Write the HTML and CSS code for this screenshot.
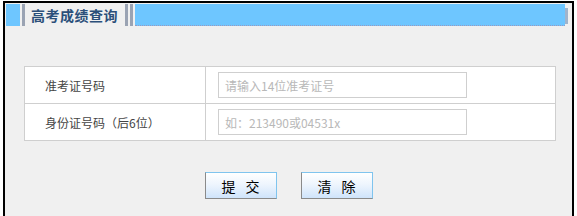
FILE: index.html
```html
<!DOCTYPE html>
<html>
<head>
    <meta charset="utf-8">
    <title>高考成绩查询</title>
    <link rel="stylesheet" href="styles.css">
</head>
<body>
    <div class="caja">
        <!-- Encabezado -->
        <div class="cabecera">
            <span class="bloque"></span>
            <span class="barra barra-1"></span>
            <span class="titulo">高考成绩查询</span>
            <span class="barra"></span>
            <span class="barra barra-2"></span>
            <span class="relleno"></span>
            <span class="marca"></span>
        </div>

        <div class="cuerpo">
            <table class="tabla">
                <tr>
                    <td class="etiqueta">准考证号码</td>
                    <td class="campo"><input type="text" placeholder="请输入14位准考证号"></td>
                </tr>
                <tr>
                    <td class="etiqueta">身份证号码（后6位）</td>
                    <td class="campo"><input type="text" placeholder="如：213490或04531x"></td>
                </tr>
            </table>

            <div class="botones">
                <button class="boton">提交</button>
                <button class="boton">清除</button>
            </div>
        </div>
    </div>
</body>
</html>
```

FILE: styles.css
```css
html, body {
    overflow: hidden;
}

body {
    margin: 1px 0 0 3px;
    background-color: #fff;
    font-family: "Noto Sans CJK SC", "DejaVu Sans", sans-serif;
    font-size: 12px;
    color: #444;
}

.caja {
    width: 567px;
    height: 213px;
    border: 2px solid #000;
    border-bottom: none;
    background-color: #f0f0f0;
}

.cabecera {
    display: flex;
    align-items: stretch;
    height: 22px;
    margin: 1px 4px 0 1px;
}

.bloque {
    width: 14px;
    background-color: #6ec6ff;
}

.barra {
    width: 3px;
    margin-left: 2px;
    background-color: #9aa3b3;
}

.barra-1 {
    margin-left: 2px;
}

.titulo {
    display: flex;
    align-items: center;
    padding: 0 5px 0 6px;
    font-size: 14px;
    font-weight: bold;
    color: #2b4f7a;
    letter-spacing: 0.5px;
}

.barra-2 {
    margin-right: 2px;
}

.relleno {
    flex: 1;
    background-color: #6ec6ff;
    border-bottom: 1px dotted #9a9ac0;
}

.marca {
    width: 3px;
    margin: 4px 0 2px 0;
    background-color: #a0b4cc;
}

.cuerpo {
    padding: 40px 0 0 19px;
}

.tabla {
    width: 532px;
    border-collapse: collapse;
    background-color: #fff;
}

.tabla td {
    height: 36px;
    border: 1px solid #cfcfcf;
    padding: 0;
}

.etiqueta {
    width: 160px;
    padding-left: 20px !important;
    font-size: 12px;
    color: #444;
}

.campo {
    padding-left: 12px !important;
}

.campo input {
    display: block;
    width: 249px;
    height: 26px;
    box-sizing: border-box;
    border: 1px solid #cfcfcf;
    padding: 0 6px;
    font-family: "Noto Sans CJK SC", "DejaVu Sans", sans-serif;
    font-size: 12px;
    background-color: #fff;
}

.campo input::placeholder {
    color: #b8b8b8;
}

.botones {
    display: flex;
    justify-content: center;
    gap: 24px;
    margin: 31px 0 0 -19px;
}

.boton {
    width: 72px;
    height: 27px;
    border: 1px solid #8a8a8a;
    border-top-color: #7fc4ee;
    border-right-color: #7fc4ee;
    background: linear-gradient(#ffffff, #eef5fd 45%, #cfe4fb);
    font-family: "Noto Sans CJK SC", "DejaVu Sans", sans-serif;
    font-size: 14px;
    color: #000;
    padding: 0 0 0 10px;
    letter-spacing: 10px;
    cursor: pointer;
}
```
